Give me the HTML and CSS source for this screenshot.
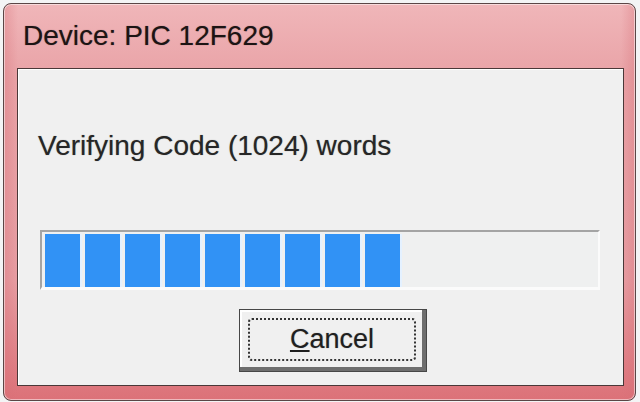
FILE: index.html
```html
<!DOCTYPE html>
<html lang="en">
  <head>
    <meta charset="UTF-8" />
    <meta name="viewport" content="width=device-width, initial-scale=1.0" />
    <title>Device: PIC 12F629</title>
    <link rel="stylesheet" href="styles.css">
  </head>
  <body>
    <div class="window">
      <div class="title-bar">Device: PIC 12F629</div>
      <div class="panel">
        <p class="status">Verifying Code (1024) words</p>
        <div class="progress">
          <span class="block"></span>
          <span class="block"></span>
          <span class="block"></span>
          <span class="block"></span>
          <span class="block"></span>
          <span class="block"></span>
          <span class="block"></span>
          <span class="block"></span>
          <span class="block"></span>
        </div>
        <button class="cancel-btn"><span class="focus"><u>C</u>ancel</span></button>
      </div>
    </div>
  </body>
</html>
```

FILE: styles.css
```css
body {
  margin: 0;
  background: #f3f4f5;
  font-family: "Liberation Sans", Arial, sans-serif;
}

.window {
  box-sizing: border-box;
  width: 633px;
  height: 398px;
  margin: 3px 0 0 3px;
  padding: 0 11px 14px 13px;
  border: 1px solid #5b4646;
  border-radius: 8px;
  background:
    linear-gradient(90deg, rgba(214, 110, 118, 0.35) 0, rgba(214, 110, 118, 0) 14px, rgba(214, 110, 118, 0) 617px, rgba(214, 110, 118, 0.35) 631px),
    linear-gradient(180deg, #f0b6b9 0%, #e9a3a7 18%, #e79ea3 70%, #dc7178 100%);
  box-shadow: inset 0 0 0 1px rgba(255, 255, 255, 0.5);
  display: flex;
  flex-direction: column;
}

.title-bar {
  height: 64px;
  padding-left: 6px;
  display: flex;
  align-items: center;
  font-size: 28px;
  color: #1c1414;
  text-shadow: 0 0 1px rgba(40, 20, 20, 0.5);
}

.panel {
  flex: 1;
  background: #f0f0f0;
  border: 1px solid #4a3838;
  box-shadow: inset 1px 1px 0 #fff;
  padding-left: 20px;
  display: flex;
  flex-direction: column;
  align-items: flex-start;
}

.status {
  margin: 61px 0 0;
  font-size: 28px;
  line-height: 32px;
  color: #262626;
  text-shadow: 0 0 1px rgba(30, 30, 30, 0.45);
}

.progress {
  box-sizing: border-box;
  width: 560px;
  height: 60px;
  margin: 68px 0 0 2px;
  padding: 2px 0 0 3px;
  border-top: 2px solid #a4a4a4;
  border-left: 2px solid #a4a4a4;
  border-right: 2px solid #fbfbfb;
  border-bottom: 3px solid #fbfbfb;
  background: #eff0f0;
  display: flex;
  gap: 5px;
}

.block {
  width: 35px;
  height: 53px;
  background: #3192f5;
  box-shadow: 2px 0 0 #e4f1ff;
}

.cancel-btn {
  box-sizing: border-box;
  width: 188px;
  height: 63px;
  margin: 19px 0 0 201px;
  border: 1px solid #474747;
  background: #f0f0f0;
  box-shadow: inset -4px -4px 0 #6e6e6e, inset 2px 2px 0 #fff;
  font-family: "Liberation Sans", Arial, sans-serif;
  font-size: 27px;
  color: #1f1f1f;
  text-shadow: 0 0 1px rgba(30, 30, 30, 0.45);
  display: flex;
  padding: 8px 10px 10px 8px;
}

.focus {
  flex: 1;
  border: 2px dotted #333;
  border-radius: 4px;
  display: flex;
  align-items: center;
  justify-content: center;
}
```
